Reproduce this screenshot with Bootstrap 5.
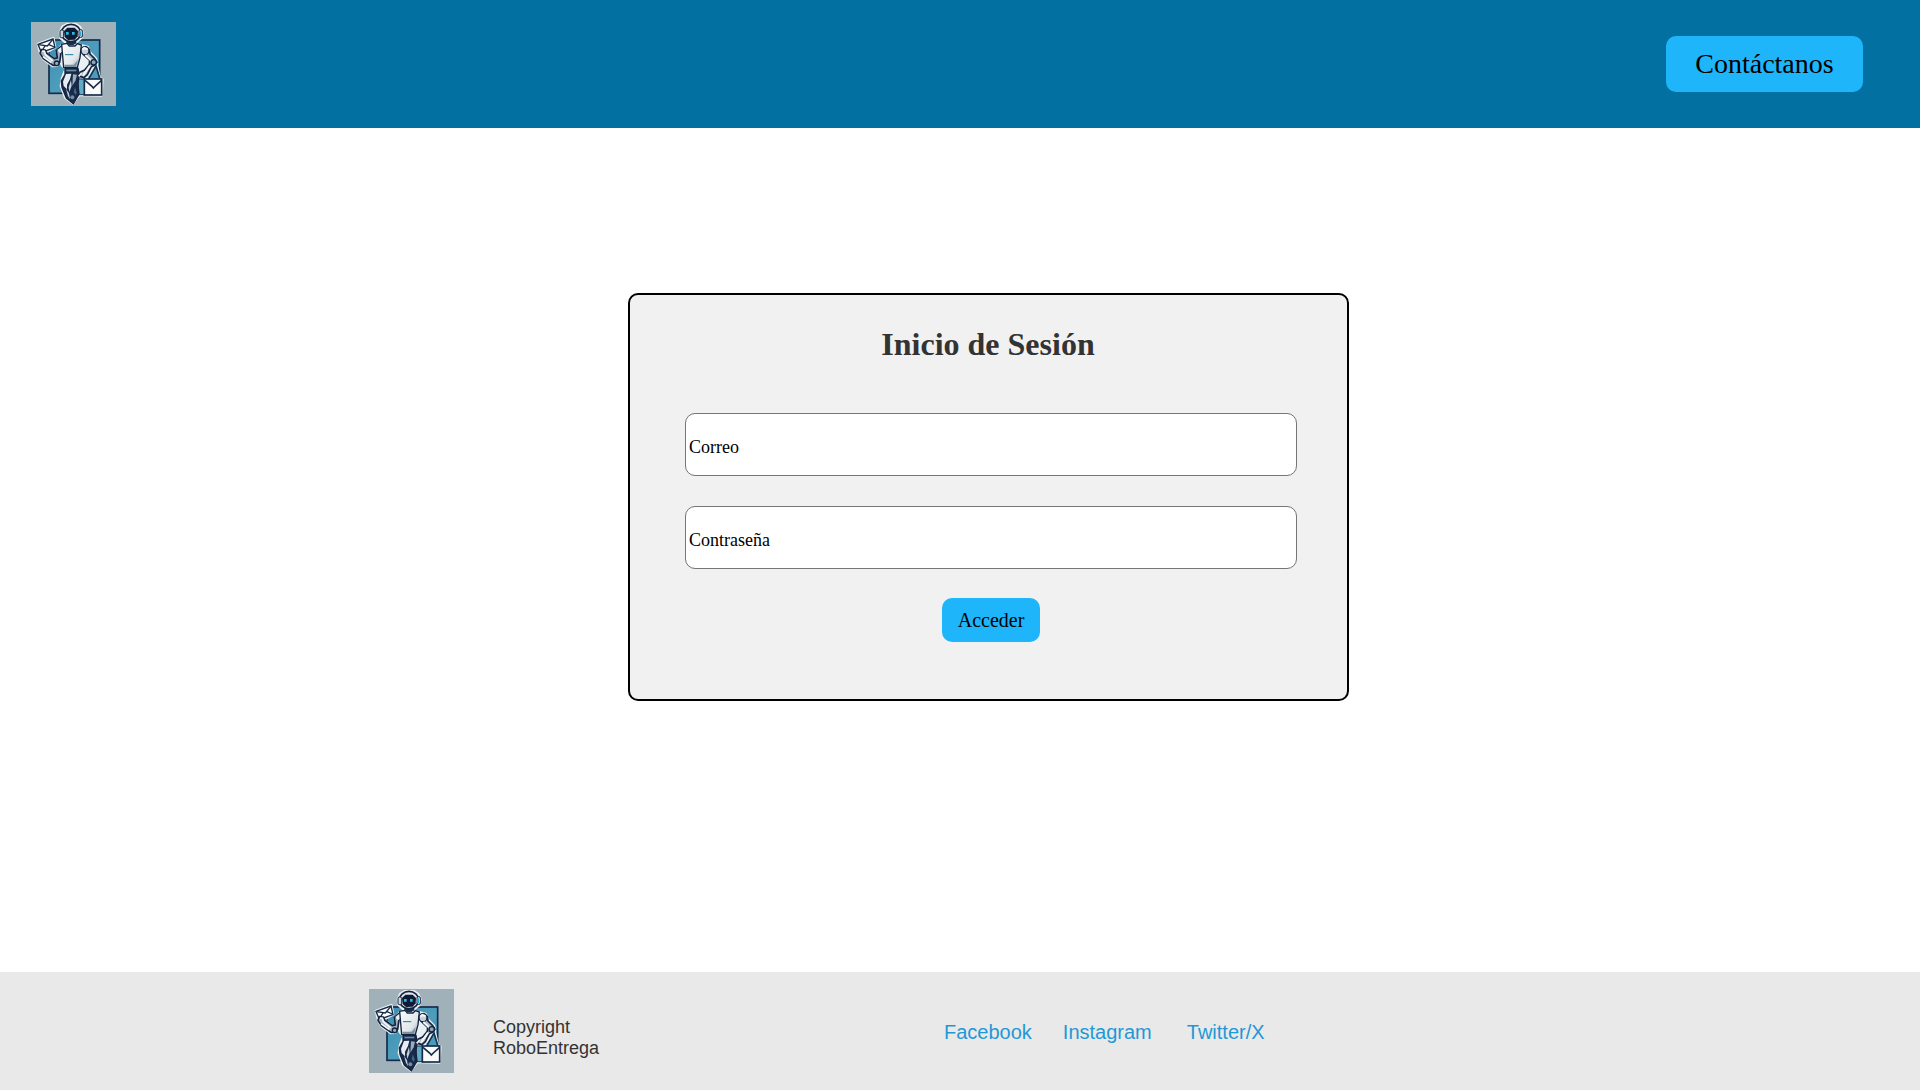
<!DOCTYPE html>
<html lang="es">
<head>
<meta charset="utf-8">
<meta name="viewport" content="width=device-width, initial-scale=1">
<title>RoboEntrega - Inicio de Sesión</title>
<link rel="stylesheet" href="https://cdn.jsdelivr.net/npm/bootstrap@5.3.0/dist/css/bootstrap.min.css">
<style>
body { font-family: "Liberation Serif", "Times New Roman", serif; background: #fff; color: #000; }
.topbar { height: 128px; background: #0270a1; padding: 0 57px 0 31px; }
.brand-logo { width: 85px; height: 84px; display: block; flex: none; }
.btn-robo, .btn-robo:hover { background: #1eb5fa; color: #000; border: 0; border-radius: 10px; line-height: 1.15; }
.btn-contact { width: 197px; height: 56px; font-size: 28px; }
.btn-login { width: 98px; height: 44px; font-size: 20px; padding: 1px 0 0; }
.page-body { padding: 165px 0 0 57px; }
.login-box { width: 721px; height: 408px; background: #f1f1f1; border: 2px solid #000; border-radius: 10px; padding: 31px 50px 0 55px; }
.login-box h1 { font-size: 32px; font-weight: 700; color: #333; line-height: 37px; margin: 0 0 50px; padding-right: 6px; }
.login-box .form-control { height: 63px; border: 1px solid #767676; border-radius: 10px; padding: 7px 3px 1px; font-size: 18px; color: #000; margin-bottom: 30px; }
.login-box .form-control::placeholder { color: #000; opacity: 1; }
.login-box .second-field { margin-bottom: 29px; }
.page-foot { height: 118px; background: #e9e9e9; font-family: "Liberation Sans", Arial, sans-serif; padding-left: 369px; padding-top: 17px; }
.copy-text { font-size: 18px; line-height: 21px; color: #333; margin: 28px 0 0 39px; width: 110px; }
.social { font-size: 20px; line-height: 23px; padding-top: 32px; margin-left: 341px; }
.social a { color: #1f98d8; text-decoration: none; }
.social a + a { margin-left: 31px; }
.social a:last-child { margin-left: 35px; }
</style>
</head>
<body class="d-flex flex-column min-vh-100">
<svg width="0" height="0" class="position-absolute" aria-hidden="true">
  <defs>
    <linearGradient id="panel" x1="0" y1="0" x2="1" y2="1"><stop offset="0" stop-color="#398eb0"/><stop offset=".55" stop-color="#4f9dbd"/><stop offset="1" stop-color="#2b7da2"/></linearGradient>
    <linearGradient id="steel" x1="0" y1="0" x2="1" y2="1"><stop offset="0" stop-color="#fbfcfc"/><stop offset=".65" stop-color="#e0e7ea"/><stop offset="1" stop-color="#8498a8"/></linearGradient>
    <symbol id="robot" viewBox="33 30 255 252" preserveAspectRatio="none">
      <rect x="33" y="30" width="255" height="252" fill="#a1b1b9"/>
      <!-- back panel -->
      <rect x="87" y="84" width="152" height="160" fill="url(#panel)" stroke="#142a48" stroke-width="5"/>
      <!-- light outline around the figure -->
      <g fill="#e9f0f3" stroke="#e9f0f3" stroke-width="8" stroke-linejoin="round">
        <path d="M54 96 100 79 105 106 77 122 115 151 111 161 98 162 70 141 61 124Z"/>
        <path d="M120 60 127 45 140 37 168 37 180 45 187 60 183 78 168 91 136 91 122 78Z"/>
        <path d="M126 99 180 99 203 105 210 122 228 141 231 156 210 186 191 198 186 185 170 177 136 170 126 160 111 120Z"/>
        <path d="M134 178 174 178 181 244 159 274 136 257 123 222 126 200Z"/>
        <path d="M175 200 212 198 231 163 239 198 247 202 244 250 175 249Z"/>
      </g>
      <!-- bag -->
      <path d="M205 202 228 162 240 202" fill="#4b9bbc" stroke="#17304e" stroke-width="5"/>
      <path d="M176 201 195 201 195 248 173 248Z" fill="#63aac4" stroke="#17304e" stroke-width="3"/>
      <rect x="193" y="201" width="52" height="48" fill="#fafcfc" stroke="#142a48" stroke-width="5"/>
      <path d="M195 205 215 222 220 228 226 222 244 206" fill="none" stroke="#142a48" stroke-width="5"/>
      <!-- letter held up -->
      <path d="M54 97 99 81 105 107 64 121Z" fill="#fff" stroke="#142a48" stroke-width="4"/>
      <path d="M56 98 82 102 98 83M64 119 75 102M103 105 87 98" fill="none" stroke="#142a48" stroke-width="4"/>
      <!-- raised arm -->
      <path d="M125 102 109 116 112 138 103 140 80 123 76 114 64 113 60 124 70 140 99 160 112 160 119 151 123 122 133 119Z" fill="#a3b3c0" stroke="#14233f" stroke-width="5" stroke-linejoin="round"/>
      <path d="M66 117 73 118 76 128 98 147M69 134 94 152" fill="none" stroke="#f3f7f8" stroke-width="5"/>
      <circle cx="110" cy="154" r="7" fill="#9badba" stroke="#14233f" stroke-width="4"/>
      <path d="M112 114 126 103 131 116 120 124Z" fill="#eaf0f3"/>
      <!-- legs -->
      <path d="M135 169 174 169 178 192 173 212 177 246 160 275 139 258 126 226 124 207 135 188Z" fill="#182a49" stroke="#14233f" stroke-width="4"/>
      <path d="M139 173 169 173 169 178 139 178Z" fill="#6490a8"/>
      <path d="M138 186 154 185 150 201 141 218 141 232 131 222 129 209Z" fill="#e6edf0"/>
      <path d="M159 187 171 188 167 205 157 221 158 203Z" fill="#9aaebb"/>
      <path d="M153 204 155 221 148 240 146 226ZM138 230 144 252 150 262 147 244Z" fill="#c4d0d8"/>
      <circle cx="157" cy="256" r="6" fill="#738da1"/>
      <path d="M165 226 170 242 166 249 161 239Z" fill="#416785"/>
      <!-- trunk -->
      <path d="M125 97 141 94 148 102 165 102 172 95 184 99 180 137 172 167 131 167 128 133Z" fill="url(#steel)" stroke="#14233f" stroke-width="4" stroke-linejoin="round"/>
      <path d="M173 145 168 165 134 165 133 158 161 158Z" fill="#7b91a2"/>
      <path d="M135 128H160" stroke="#187e9e" stroke-width="3"/>
      <!-- lowered arm -->
      <path d="M184 112 197 104 208 113 210 126 224 140 231 151 224 160 214 164 202 188 192 197 179 193 180 181 194 174 208 157 209 145 190 127Z" fill="#aabac5" stroke="#14233f" stroke-width="5" stroke-linejoin="round"/>
      <circle cx="195" cy="116" r="12" fill="#c6d1d7" stroke="#14233f" stroke-width="4"/>
      <path d="M187 113 193 108 202 112M196 129 215 147M210 161 191 188" fill="none" stroke="#f5f8f9" stroke-width="6"/>
      <circle cx="221" cy="151" r="8" fill="#8da4b3" stroke="#14233f" stroke-width="4"/>
      <path d="M185 183 176 193M195 178 189 192" fill="none" stroke="#eff4f5" stroke-width="5"/>
      <!-- head -->
      <path d="M139 84H169V94L160 99H148L139 94Z" fill="#17304e"/>
      <ellipse cx="153" cy="63" rx="29" ry="26" fill="#dfe8ec" stroke="#14233f" stroke-width="5"/>
      <rect x="120" y="54" width="11" height="23" rx="4" fill="#c7d3da" stroke="#14233f" stroke-width="3"/>
      <rect x="177" y="53" width="10" height="23" rx="4" fill="#d8e2e7" stroke="#14233f" stroke-width="3"/>
      <path d="M181 58V72" stroke="#21acd4" stroke-width="4"/>
      <path d="M132 57 142 47 164 47 174 57 173 73 164 83 144 84 134 75Z" fill="#101a35"/>
      <path d="M138 60H146V68H138ZM156 60H164V68H156Z" fill="#24bde0"/>
    </symbol>
  </defs>
</svg>

<header class="topbar d-flex align-items-center justify-content-between">
  <a href="#" aria-label="RoboEntrega"><svg class="brand-logo"><use href="#robot"/></svg></a>
  <button type="button" class="btn btn-robo btn-contact p-0">Contáctanos</button>
</header>

<main class="page-body flex-grow-1 d-flex justify-content-center align-items-start">
  <form class="login-box">
    <h1 class="text-center">Inicio de Sesión</h1>
    <input type="email" class="form-control" placeholder="Correo">
    <input type="password" class="form-control second-field" placeholder="Contraseña">
    <div class="text-center"><button type="button" class="btn btn-robo btn-login">Acceder</button></div>
  </form>
</main>

<footer class="page-foot d-flex align-items-start">
  <svg class="brand-logo"><use href="#robot"/></svg>
  <p class="copy-text">Copyright RoboEntrega</p>
  <nav class="social d-flex">
    <a href="#">Facebook</a>
    <a href="#">Instagram</a>
    <a href="#">Twitter/X</a>
  </nav>
</footer>
<script src="https://cdn.jsdelivr.net/npm/bootstrap@5.3.0/dist/js/bootstrap.bundle.min.js"></script>
</body>
</html>
